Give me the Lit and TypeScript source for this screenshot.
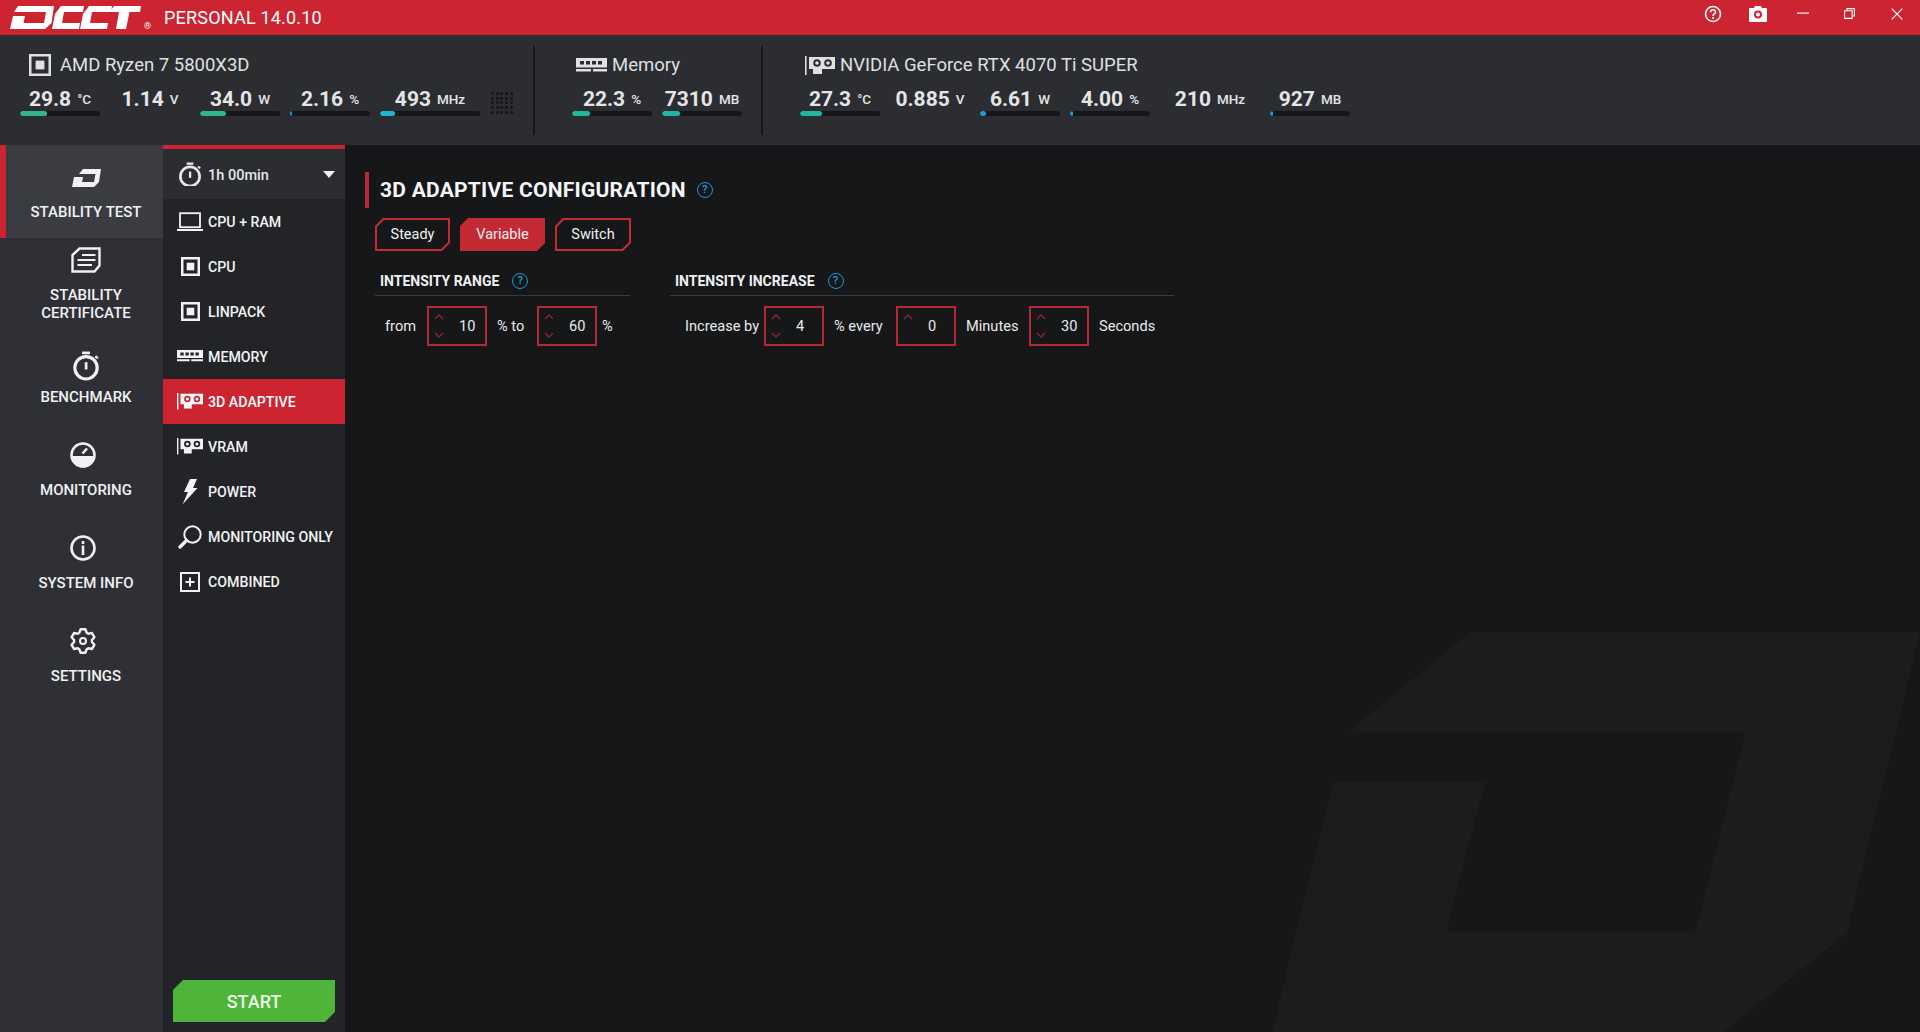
import { LitElement, html, css, svg } from "lit";
import { customElement } from "lit/decorators.js";

const ic = (w: number, h: number, body: unknown, dw = w) =>
  html`<svg width=${dw} height=${(h * dw) / w} viewBox="0 0 ${w} ${h}" fill="none">${body}</svg>`;

const W = "currentColor";
const chip = (s = 20) =>
  ic(s, s, svg`<rect x="1.25" y="1.25" width=${s - 2.5} height=${s - 2.5} stroke=${W} stroke-width="2.5"/><rect x=${s * 0.3} y=${s * 0.3} width=${s * 0.4} height=${s * 0.4} fill=${W}/>`);
const ram = (dw = 31) =>
  ic(31, 15, svg`<path fill=${W} fill-rule="evenodd" d="M0 0H31V9.5H0ZM4 3V6.5H8V3ZM10 3V6.5H14V3ZM16 3V6.5H20V3ZM22 3V6.5H26V3Z"/><path fill=${W} d="M0 11H15V13.5H0ZM17 11H31V13.5H17Z"/>`, dw);
const gpu = (dw = 30) =>
  ic(30, 19, svg`<rect x="0" y="0" width="1.6" height="19" fill=${W}/><path fill=${W} fill-rule="evenodd" d="M4 1H30V13H17V18H8V13H4ZM12 3.2A3.8 3.8 0 1 0 12 10.8A3.8 3.8 0 1 0 12 3.2ZM23 3.2A3.8 3.8 0 1 0 23 10.8A3.8 3.8 0 1 0 23 3.2Z"/><circle cx="12" cy="7" r="1.8" fill=${W}/><circle cx="23" cy="7" r="1.8" fill=${W}/>`, dw);
const watch = (s = 25) =>
  ic(25, 26, svg`<circle cx="12.5" cy="15" r="10" stroke=${W} stroke-width="2.8"/><rect x="9" y="0.5" width="7" height="2.4" fill=${W}/><rect x="11.4" y="10" width="2.4" height="6.5" fill=${W}/><rect x="20.5" y="4.5" width="3" height="2.2" transform="rotate(40 22 5.6)" fill=${W}/>`, s);
const laptop = () =>
  ic(26, 20, svg`<rect x="3" y="1.2" width="20" height="14" stroke=${W} stroke-width="1.8"/><rect x="0" y="17" width="26" height="2" fill=${W}/>`);
const plusBox = () =>
  ic(20, 20, svg`<rect x="1" y="1" width="18" height="18" stroke=${W} stroke-width="2"/><path fill=${W} d="M9 5.5H11V9H14.5V11H11V14.5H9V11H5.5V9H9Z"/>`);
const bolt = () =>
  ic(16, 26, svg`<path fill=${W} d="M8 0H15L11 9H15.5L0.5 25.5L6 13H2Z"/>`);
const lens = () =>
  ic(24, 24, svg`<circle cx="14.5" cy="9.5" r="8.2" stroke=${W} stroke-width="2"/><path d="M8.5 15.5L2 22" stroke=${W} stroke-width="3.4" stroke-linecap="round"/>`);
const mark = () =>
  ic(29, 18, svg`<path fill=${W} d="M11 0H29L27 13L22 18H0L2 8H11L10 13H22L23.5 5H7Z"/>`);
const cert = () =>
  ic(30, 26, svg`<path stroke=${W} stroke-width="2.4" d="M8.5 1.5H28.5V18.5L23.5 24.5H1.5V8Z"/><path fill=${W} d="M11 7H24.5V9H11ZM6.5 12H24.5V14H6.5ZM6.5 17H21V19H6.5Z"/>`);
const gauge = () =>
  ic(26, 26, svg`<circle cx="13" cy="13" r="11.5" stroke=${W} stroke-width="2.6"/><path fill=${W} d="M1.5 14H24.5A11.5 11.5 0 0 1 1.5 14Z"/><path stroke=${W} stroke-width="2.6" d="M12.5 11.5L17 6.5"/>`);
const info = () =>
  ic(26, 26, svg`<circle cx="13" cy="13" r="11.5" stroke=${W} stroke-width="2.6"/><rect x="11.7" y="6" width="2.6" height="3" fill=${W}/><rect x="11.7" y="10.5" width="2.6" height="9.5" fill=${W}/>`);
const gearPath = () => {
  const pts: string[] = [];
  for (let i = 0; i < 6; i++) {
    const a = (i * Math.PI) / 3 - Math.PI / 2;
    const p = (r: number, d: number) => {
      const t = a + d;
      return `${(13 + r * Math.cos(t)).toFixed(2)} ${(13 + r * Math.sin(t)).toFixed(2)}`;
    };
    pts.push(`L${p(9, -0.42)} L${p(12, -0.2)} L${p(12, 0.2)} L${p(9, 0.42)}`);
  }
  return "M" + pts.join(" ").slice(1) + "Z";
};
const gear = () =>
  ic(26, 26, svg`<path d=${gearPath()} stroke=${W} stroke-width="2.4" stroke-linejoin="round"/><circle cx="13" cy="13" r="3" stroke=${W} stroke-width="2"/>`);
const chevUp = () => html`<svg class="chev up" width="10" height="6" viewBox="0 0 10 6" fill="none"><path d="M1 5L5 1L9 5" stroke="currentColor" stroke-width="1.4"/></svg>`;
const chevDown = () => html`<svg class="chev down" width="10" height="6" viewBox="0 0 10 6" fill="none"><path d="M1 1L5 5L9 1" stroke="currentColor" stroke-width="1.4"/></svg>`;

type M = { v: string; u: string; w?: number; p?: number; c?: string };
const GREEN = "#33b588", TEAL = "#1fb59f", CYAN = "#1fb6cf", BLUE = "#1a9fd8";
const cpuM: M[] = [
  { v: "29.8", u: "°C", p: 34, c: GREEN },
  { v: "1.14", u: "V" },
  { v: "34.0", u: "W", p: 32, c: GREEN },
  { v: "2.16", u: "%", p: 3, c: BLUE },
  { v: "493", u: "MHz", w: 100, p: 15, c: CYAN },
];
const memM: M[] = [
  { v: "22.3", u: "%", p: 22, c: TEAL },
  { v: "7310", u: "MB", p: 22, c: TEAL },
];
const gpuM: M[] = [
  { v: "27.3", u: "°C", p: 27, c: TEAL },
  { v: "0.885", u: "V" },
  { v: "6.61", u: "W", p: 7, c: BLUE },
  { v: "4.00", u: "%", p: 4, c: BLUE },
  { v: "210", u: "MHz", w: 100 },
  { v: "927", u: "MB", p: 4, c: BLUE },
];

@customElement("app-root")
export class AppRoot extends LitElement {
  static styles = css`
    :host { display: block; width: 100%; height: 100vh; overflow: hidden; font-family: Roboto, "Liberation Sans", sans-serif; color: #e6e7e9; background: #161719; }
    .app { display: flex; flex-direction: column; height: 1032px; }
    .title { flex: 0 0 35px; background: #cc2531; color: #fff; display: flex; align-items: center; position: relative; }
    .logo { margin-left: 10px; display: flex; height: 35px; }
    .reg { font-size: 9px; margin: 17px 0 0 3px; width: 11px; }
    .ver { margin-left: 9px; font-size: 18px; letter-spacing: 0.2px; }
    .win { margin-left: auto; display: flex; align-items: center; height: 35px; }
    .win > span { width: 47px; display: flex; justify-content: center; margin-top: -8px; }
    .win > span.w48 { width: 48px; }
    .win > span.w42 { width: 42px; }
    .head { flex: 0 0 110px; background: #2c2d31; display: flex; }
    .grp { display: flex; flex-direction: column; padding-top: 18px; }
    .grp.cpu { margin-left: 20px; }
    .grp.mem { margin-left: 37px; }
    .grp.gpu { margin-left: 37px; }
    .ttl { height: 24px; display: flex; align-items: center; font-size: 18.5px; color: #dfe0e2; white-space: nowrap; }
    .cpu .ttl { padding-left: 9px; gap: 9px; }
    .mem .ttl { padding-left: 4px; gap: 5px; }
    .gpu .ttl { padding-left: 5px; gap: 5px; }
    .row { display: flex; gap: 10px; margin-top: 8px; }
    .m { width: 80px; display: flex; flex-direction: column; }
    .m.wide { width: 100px; }
    .val { height: 26px; display: flex; justify-content: center; align-items: baseline; gap: 6px; font-size: 21px; font-weight: 700; line-height: 28px; color: #e4e5e7; white-space: nowrap; }
    .val small { font-size: 13.5px; font-weight: 500; position: relative; top: -2px; }
    .bar { height: 5px; border-radius: 3px; background: #15161a; overflow: hidden; }
    .bar.none { background: transparent; }
    .bar i { display: block; height: 100%; border-radius: 3px; }
    .dots { width: 22px; height: 22px; margin: 15px 0 0 11px; display: grid; grid-template-columns: repeat(5, 3px); grid-auto-rows: 3px; gap: 1.7px; }
    .dots i { background: #17181b; }
    .cpurow { display: flex; }
    .div { width: 2px; height: 90px; margin: 10px 0 0 20px; background: #17181b; }
    .div.two { margin-left: 19px; }
    .body { flex: 1; display: flex; min-height: 0; }
    .nav { flex: 0 0 163px; background: #2f3035; display: flex; flex-direction: column; }
    .ni { display: flex; flex-direction: column; align-items: center; padding-left: 9px; box-sizing: border-box; font-size: 15px; font-weight: 500; line-height: 18px; text-align: center; color: #f0f1f2; }
    .ni svg { display: block; }
    .ni.on { background: #3b3c41; border-left: 6px solid #cc2531; padding-left: 3px; }
    .ni .ico { display: flex; align-items: center; justify-content: center; height: 30px; }
    .ni .ico.l { margin-right: 6px; }
    .sub { flex: 0 0 182px; background: #232428; display: flex; flex-direction: column; }
    .timer { height: 50px; border-top: 4px solid #cc2531; background: #2c2d31; display: flex; align-items: center; padding-left: 15px; font-size: 14.5px; font-weight: 500; position: relative; }
    .timer span { margin-left: 6px; position: relative; top: 1px; }
    .tri { margin-left: auto; margin-right: 10px; width: 0; height: 0; border-left: 6.5px solid transparent; border-right: 6.5px solid transparent; border-top: 7px solid #eee; }
    .si { height: 45px; display: flex; align-items: center; font-size: 14.2px; font-weight: 500; color: #f2f3f4; white-space: nowrap; }
    .si.on { background: #cc2531; color: #fff; }
    .si .sico { width: 30px; margin-left: 12px; margin-right: 3px; display: flex; justify-content: center; }
    .start { margin: auto 10px 10px; height: 42px; background: #4fb43a; color: #eefbe8; display: flex; align-items: center; justify-content: center; font-size: 18px; font-weight: 500; clip-path: polygon(10px 0, 100% 0, 100% calc(100% - 10px), calc(100% - 10px) 100%, 0 100%, 0 10px); }
    .main { flex: 1; position: relative; padding: 27px 0 0 20px; background: #161719; overflow: hidden; }
    .wm { position: absolute; left: 0; top: 0; width: 1575px; height: 887px; }
    .cnt { position: relative; }
    .h { height: 36px; border-left: 4px solid #b92a34; padding-left: 11px; display: flex; align-items: center; font-size: 21px; font-weight: 700; letter-spacing: 0.25px; color: #f4f5f6; }
    .help { display: inline-flex; align-items: center; justify-content: center; box-sizing: border-box; width: 16px; height: 16px; border: 1.6px solid #1c97d6; border-radius: 50%; color: #1c97d6; font-size: 11.5px; font-weight: 500; line-height: 1; letter-spacing: 0; }
    .h .help { margin-left: 11px; }
    .tabs { display: flex; gap: 10px; margin: 10px 0 0 10px; }
    .tab { height: 33px; background: #c42a33; clip-path: polygon(8px 0, 100% 0, 100% calc(100% - 8px), calc(100% - 8px) 100%, 0 100%, 0 8px); position: relative; display: flex; align-items: center; justify-content: center; font-size: 14.5px; color: #f0f1f2; }
    .tab::before { content: ""; position: absolute; inset: 2px; background: #161719; clip-path: polygon(7px 0, 100% 0, 100% calc(100% - 7px), calc(100% - 7px) 100%, 0 100%, 0 7px); }
    .tab span { position: relative; }
    .tab.on::before { display: none; }
    .t1 { width: 75px; } .t2 { width: 85px; } .t3 { width: 76px; }
    .secs { display: flex; gap: 40px; margin: 16px 0 0 10px; }
    .sec1 { width: 255px; } .sec2 { width: 504px; }
    .st { height: 27px; padding-bottom: 1px; border-bottom: 1px solid #3a3b3d; padding-left: 5px; display: flex; align-items: center; gap: 13px; font-size: 14px; font-weight: 700; color: #eff0f1; }
    .fr { display: flex; align-items: center; margin-top: 10px; height: 40px; padding-left: 10px; font-size: 14.6px; color: #e8e9ea; white-space: nowrap; }
    .sec2 .fr { padding-left: 15px; }
    .lb { flex: none; }
    .w32 { width: 32px; } .w30 { width: 30px; } .w69 { width: 69px; } .w52 { width: 52px; } .w53 { width: 53px; }
    .num { width: 60px; height: 40px; box-sizing: border-box; border: 2px solid #b52a33; position: relative; display: flex; align-items: center; padding-left: 30px; margin: 0 10px; flex: none; }
    .chev { position: absolute; left: 5px; color: #8e2630; }
    .chev.up { top: 6px; } .chev.down { bottom: 6px; }
    .ml5 { margin-left: -5px; }
  `;

  private metric(m: M) {
    return html`<div class="m ${m.w ? "wide" : ""}">
      <div class="val">${m.v}<small>${m.u}</small></div>
      <div class="bar ${m.p ? "" : "none"}">${m.p ? html`<i style="width:${m.p}%;background:${m.c}"></i>` : ""}</div>
    </div>`;
  }

  private num(v: string, down = true) {
    return html`<div class="num">${chevUp()}${down ? chevDown() : ""}${v}</div>`;
  }

  render() {
    const nav = [
      ["STABILITY TEST", mark(), 93, 18, 10, true, false],
      ["STABILITY<br>CERTIFICATE", cert(), 95, 7, 11, false, false],
      ["BENCHMARK", watch(28), 89, 18, 7, false, false],
      ["MONITORING", gauge(), 93, 18, 11, false, true],
      ["SYSTEM INFO", info(), 93, 18, 11, false, true],
      ["SETTINGS", gear(), 93, 18, 11, false, true],
    ] as const;
    const sub = [
      ["CPU + RAM", laptop()],
      ["CPU", chip(19)],
      ["LINPACK", chip(19)],
      ["MEMORY", ram(26)],
      ["3D ADAPTIVE", gpu(26), true],
      ["VRAM", gpu(26)],
      ["POWER", bolt()],
      ["MONITORING ONLY", lens()],
      ["COMBINED", plusBox()],
    ] as const;
    return html`<div class="app">
      <div class="title">
        <div class="logo">
          <svg width="131" height="35" viewBox="10 0 131 35" role="img" aria-label="OCCT logo">
            <path fill="#fff" d="M18 6H54L51.5 23L45 29H10L13 16H25L23.5 23H44L46 12H14Z"/>
            <path fill="#fff" d="M61 6H84L83 12H64L62 23H80L79 29H52L55 14Z"/>
            <path fill="#fff" d="M89 6H112L111 12H92L90 23H108L107 29H80L83 14Z"/>
            <path fill="#fff" d="M114 6H141L140 12H129.5L126 29H116L119 12H109Z"/>
          </svg>
        </div>
        <span class="reg">®</span>
        <span class="ver">PERSONAL 14.0.10</span>
        <div class="win">
          <span class="w48">${ic(18, 18, svg`<circle cx="9" cy="9" r="7.5" stroke="#fff" stroke-width="1.6"/><path d="M6.5 7.2C6.5 3.8 11.8 4 11.5 7.3C11.4 8.9 9 9 9 11" stroke="#fff" stroke-width="1.6"/><rect x="8.1" y="12" width="1.8" height="1.8" fill="#fff"/>`)}</span>
          <span class="w42">${ic(18, 16, svg`<path fill="#fff" fill-rule="evenodd" d="M1 2H5L6 0H12L13 2H17A1 1 0 0 1 18 3V15A1 1 0 0 1 17 16H1A1 1 0 0 1 0 15V3A1 1 0 0 1 1 2ZM9 4.5A4 4 0 1 0 9 12.5A4 4 0 1 0 9 4.5ZM9 6.5A2 2 0 1 1 9 10.5A2 2 0 1 1 9 6.5Z"/>`)}</span>
          <span>${ic(12, 3, svg`<rect y="0.5" width="12" height="1.2" fill="#fff"/>`)}</span>
          <span>${ic(11, 11, svg`<path d="M3 2.5V.6H10.4V8H8.4M.6 2.8H8.2V10.4H.6Z" stroke="#fff" stroke-width="1.1"/>`)}</span>
          <span>${ic(12, 12, svg`<path d="M.7 .7L11.3 11.3M11.3 .7L.7 11.3" stroke="#fff" stroke-width="1.2"/>`)}</span>
        </div>
      </div>
      <div class="head">
        <div class="grp cpu">
          <div class="ttl">${chip(22)}AMD Ryzen 7 5800X3D</div>
          <div class="cpurow">
            <div class="row">${cpuM.map((m) => this.metric(m))}</div>
            <div class="dots">${Array.from({ length: 25 }, () => html`<i></i>`)}</div>
          </div>
        </div>
        <div class="div"></div>
        <div class="grp mem">
          <div class="ttl">${ram()}Memory</div>
          <div class="row">${memM.map((m) => this.metric(m))}</div>
        </div>
        <div class="div two"></div>
        <div class="grp gpu">
          <div class="ttl">${gpu()}NVIDIA GeForce RTX 4070 Ti SUPER</div>
          <div class="row">${gpuM.map((m) => this.metric(m))}</div>
        </div>
      </div>
      <div class="body">
        <div class="nav">
          ${nav.map(([t, i, h, pt, gap, on, left]) => html`
            <div class="ni ${on ? "on" : ""}" style="height:${h}px;padding-top:${pt}px">
              <div class="ico ${left ? "l" : ""}">${i}</div>
              <div style="margin-top:${gap}px" .innerHTML=${t}></div>
            </div>`)}
        </div>
        <div class="sub">
          <div class="timer">${watch(24)}<span>1h 00min</span><i class="tri"></i></div>
          ${sub.map((s) => html`<div class="si ${s[2] ? "on" : ""}"><div class="sico">${s[1]}</div>${s[0]}</div>`)}
          <div class="start">START</div>
        </div>
        <div class="main">
          <svg class="wm" viewBox="345 145 1575 887"><path fill="#1b1c1d" d="M1470 632H1920L1847 933L1723 1032H1272L1333 782H1485L1446 932H1695L1745 732H1348Z"/></svg>
          <div class="cnt">
            <div class="h">3D ADAPTIVE CONFIGURATION<span class="help">?</span></div>
            <div class="tabs">
              <div class="tab t1"><span>Steady</span></div>
              <div class="tab t2 on"><span>Variable</span></div>
              <div class="tab t3"><span>Switch</span></div>
            </div>
            <div class="secs">
              <div class="sec1">
                <div class="st">INTENSITY RANGE<span class="help">?</span></div>
                <div class="fr"><span class="lb w32">from</span>${this.num("10")}<span class="lb w30">% to</span>${this.num("60")}<span class="ml5">%</span></div>
              </div>
              <div class="sec2">
                <div class="st">INTENSITY INCREASE<span class="help">?</span></div>
                <div class="fr"><span class="lb w69">Increase by</span>${this.num("4")}<span class="lb w52">% every</span>${this.num("0", false)}<span class="lb w53">Minutes</span>${this.num("30")}<span>Seconds</span></div>
              </div>
            </div>
          </div>
        </div>
      </div>
    </div>`;
  }
}
